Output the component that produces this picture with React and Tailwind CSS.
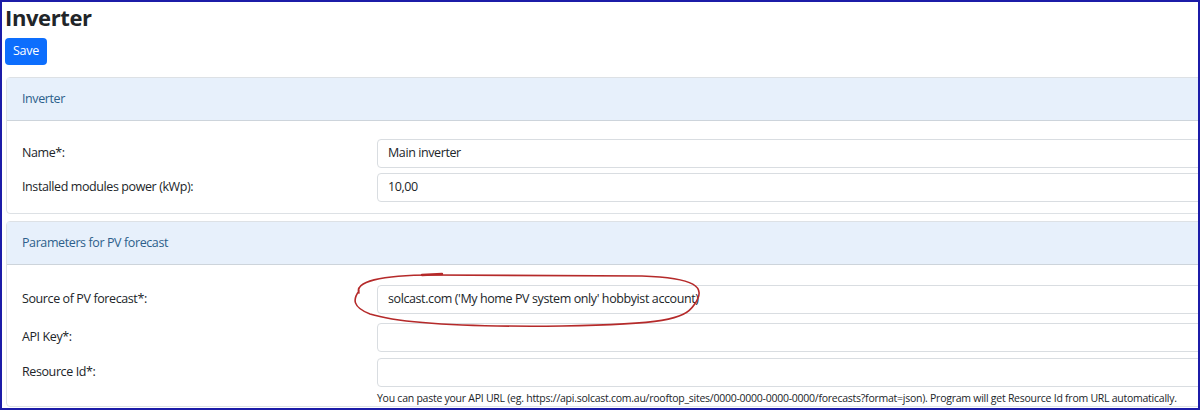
import React from "react";

function Row({ label, value, className = "" }) {
  return (
    <div className={`flex items-center ${className}`}>
      <div className="w-[355px] shrink-0 text-[12.5px] tracking-[-0.4px] text-[#212529]">{label}</div>
      <div className="flex-1 h-[29px] border border-[#d9dde1] rounded-[4px] bg-white flex items-center px-[10px] text-[12.5px] tracking-[-0.4px] text-[#212529]">
        {value}
      </div>
    </div>
  );
}

function CardHeader({ children }) {
  return (
    <div className="h-[43px] bg-[#e7f0fb] border-b border-[#cdd4db] flex items-center px-[15px] text-[12.5px] tracking-[-0.4px] text-[#2d5f8b]">
      {children}
    </div>
  );
}

export default function App() {
  return (
    <div
      className="w-[1200px] h-[410px] bg-white border-2 border-[#1c1ca8] overflow-hidden relative"
      style={{ fontFamily: '"Segoe UI", "Open Sans", "Noto Sans", sans-serif' }}
    >
      <div className="w-[1260px] pl-[3px] pt-[1px]">
        <h1 className="text-[22px] tracking-[-0.4px] font-bold leading-[29px] text-[#212529]">Inverter</h1>
        <button className="mt-[6px] h-[27px] px-[8px] rounded-[4px] bg-[#0d6efd] text-white text-[12.5px] tracking-[-0.3px] leading-none">
          Save
        </button>

        <div className="mt-[12px] ml-[1px] border border-[#dde1e5] rounded-[4px]">
          <CardHeader>Inverter</CardHeader>
          <div className="pt-[18px] pb-[11px] px-[15px] flex flex-col gap-[5px]">
            <Row label="Name*:" value="Main inverter" />
            <Row label="Installed modules power (kWp):" value="10,00" />
          </div>
        </div>

        <div className="mt-[7px] ml-[1px] border border-[#dde1e5] rounded-[4px]">
          <CardHeader>Parameters for PV forecast</CardHeader>
          <div className="pt-[20px] px-[15px] flex flex-col">
            <Row label="Source of PV forecast*:" value="solcast.com ('My home PV system only' hobbyist account)" />
            <Row label="API Key*:" value="" className="mt-[9px]" />
            <Row label="Resource Id*:" value="" className="mt-[6px]" />
            <div className="pl-[355px] mt-[3px] whitespace-nowrap text-[10.5px] tracking-[-0.25px] leading-[16px] text-[#212529]">
              You can paste your API URL (eg. https://api.solcast.com.au/rooftop_sites/0000-0000-0000-0000/forecasts?format=json). Program will get Resource Id from URL automatically.
            </div>
          </div>
        </div>
      </div>

      <svg className="absolute left-0 top-0 pointer-events-none" width="1200" height="410">
        <path
          d="M 357 291 C 352 280, 378 273, 430 273 L 640 274 C 692 276, 706 284, 692 303 C 682 318, 660 322, 560 324 C 470 325, 400 322, 368 312 C 350 305, 351 297, 357 289"
          fill="none"
          stroke="#b52a2a"
          strokeWidth="1.6"
          strokeLinecap="round"
        />
        <path d="M 420 273 L 440 272" stroke="#b52a2a" strokeWidth="2.4" strokeLinecap="round" />
      </svg>
    </div>
  );
}
